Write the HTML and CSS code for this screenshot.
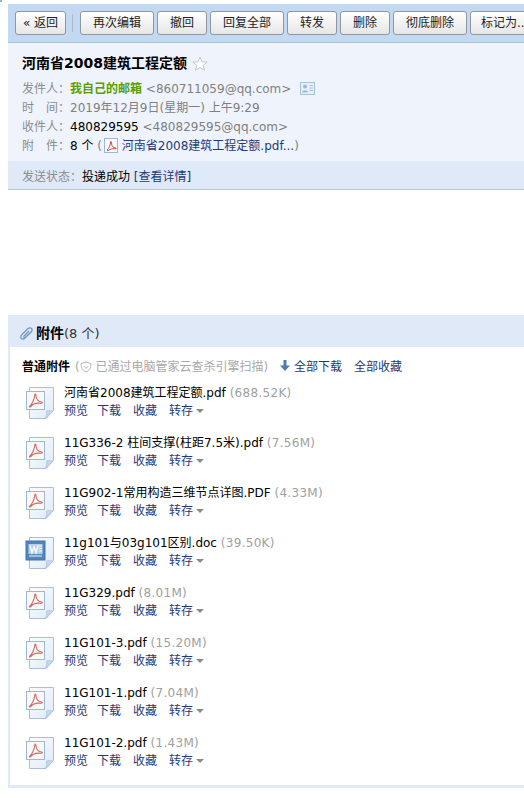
FILE: index.html
```html
<!DOCTYPE html>
<html lang="zh-CN">
<head>
  <meta charset="UTF-8">
  <meta name="viewport" content="width=device-width, initial-scale=1">
  <title>河南省2008建筑工程定额</title>
  <link rel="stylesheet" href="styles.css">
</head>
<body>
  <svg class="defs" width="0" height="0">
    <linearGradient id="page" x1="0" y1="0" x2="1" y2="1">
      <stop offset="0" stop-color="#fbfdff"/>
      <stop offset="1" stop-color="#dfeaf7"/>
    </linearGradient>
    <symbol id="file-pdf" viewBox="0 0 30 32">
      <path d="M4.500 .5H28.500V23.500L21 31.500H4.500Z" fill="url(#page)" stroke="#a9bfdc"/>
      <path d="M28 24C25 23.500 22.500 23.500 21.500 24C22 26.500 21.500 29 20.500 31Z" fill="#c6d8ee" stroke="#a9bfdc" stroke-width=".7"/>
      <rect x="1.500" y="4.500" width="18" height="18" fill="#fbf8f8" stroke="#9db7d8"/>
      <path d="M4.500 19.500C7 17.500 9.500 12 9.800 8C10 6.500 11 7 11 9C11 12 13.500 15 16.500 15C18 15 17.500 16.500 15.500 16.200C12 15.800 8 16.500 6 19.500C5.500 20.200 4 20 4.500 19.500Z" fill="none" stroke="#cf6a66" stroke-width="1.100"/>
    </symbol>
    <symbol id="file-doc" viewBox="0 0 30 32">
      <path d="M4.500 .5H28.500V23.500L21 31.500H4.500Z" fill="url(#page)" stroke="#a9bfdc"/>
      <path d="M28 24C25 23.500 22.500 23.500 21.500 24C22 26.500 21.500 29 20.500 31Z" fill="#c6d8ee" stroke="#a9bfdc" stroke-width=".7"/>
      <rect x="1" y="4" width="19" height="19" fill="#4f86bd" stroke="#3f75ad"/>
      <rect x="3.500" y="7" width="14" height="10" fill="#b9cfe6"/>
      <path d="M5 8.500L7 15.500L9 10L11 15.500L13 8.500" fill="none" stroke="#f2f6fb" stroke-width="1.600"/>
      <path d="M14 9H17M14 11.500H17M14 14H17M4 19H17" stroke="#f2f6fb"/>
    </symbol>
  </svg>
  <span class="corner"></span>

  <div class="toolbar">
    <button class="btn btn-back">« 返回</button>
    <span class="sep"></span>
    <button class="btn w74">再次编辑</button>
    <button class="btn w50">撤回</button>
    <button class="btn w74">回复全部</button>
    <button class="btn w50">转发</button>
    <button class="btn w50">删除</button>
    <button class="btn w74">彻底删除</button>
    <button class="btn btn-more">标记为...</button>
  </div>

  <div class="mail-head">
    <h1 class="subject">河南省2008建筑工程定额
      <svg class="star" width="16" height="15" viewBox="0 0 16 15"><path d="M8 1L10 5.800L15.200 6.100L11.200 9.400L12.500 14.300L8 11.600L3.500 14.300L4.800 9.400L.8 6.100L6 5.800Z" fill="#fff" stroke="#c4c8cf"/></svg>
    </h1>
    <div class="meta"><span class="lbl">发件人：</span><b class="sender">我自己的邮箱</b> <span class="addr">&lt;860711059@qq.com&gt;</span>
      <svg class="card-icon" width="15" height="13" viewBox="0 0 15 13"><rect x=".5" y=".5" width="14" height="12" fill="#e6eef8" stroke="#a9c2dc"/><circle cx="5" cy="4.500" r="2" fill="#9db9d6"/><path d="M2 10.500C2 7.500 8 7.500 8 10.500Z" fill="#9db9d6"/><path d="M9.500 3.500H13M9.500 6H13M9.500 8.500H13" stroke="#a9c2dc"/></svg>
    </div>
    <div class="meta"><span class="lbl">时　间：</span><span class="addr">2019年12月9日(星期一) 上午9:29</span></div>
    <div class="meta"><span class="lbl">收件人：</span>480829595 <span class="addr">&lt;480829595@qq.com&gt;</span></div>
    <div class="meta"><span class="lbl">附　件：</span>8 个 <span class="addr">(</span><svg class="mini-pdf" width="14" height="15"><rect x=".5" y=".5" width="13" height="14" fill="#f7f9fc" stroke="#9db7d8"/><path d="M3 12C5 10.500 6.500 7 6.500 4C6.500 3 7.500 3 7.500 5C7.500 8 9 10 12 10C12.500 10 12.500 11 11 10.800C8.500 10.500 5.500 11 4 12.800Z" fill="none" stroke="#c8504a"/></svg> <a class="link">河南省2008建筑工程定额.pdf...</a><span class="addr">)</span></div>
  </div>
  <div class="status"><span class="lbl">发送状态：</span>投递成功 <a class="link">[查看详情]</a></div>

  <div class="attach">
    <div class="attach-title">
      <svg class="clip" width="15" height="15" viewBox="0 0 15 15"><path d="M12.500 5.500L6 12C4.500 13.500 2 13.500 1.800 11.500C1.600 10.500 2 9.500 3 8.500L8.500 3C10 1.500 12.500 1.500 13 3C13.500 4.500 12.800 5.500 12 6.300L6.500 11.500C5.500 12.300 4.300 11.500 5 10.200L10 5" fill="none" stroke="#6f98c6" stroke-width="1.300"/></svg>
      <b>附件</b>(8 个)
    </div>
    <div class="attach-body">
      <div class="attach-sub">
        <b>普通附件</b>
        <span class="scan">(<svg class="shield" width="12" height="12" viewBox="0 0 12 12"><path d="M6 1L11 2.500C11 6.500 9.500 9.500 6 11C2.500 9.500 1 6.500 1 2.500Z" fill="none" stroke="#b5b5b5"/><path d="M3.800 5L6 7.500L8.200 5" fill="none" stroke="#b5b5b5"/></svg> 已通过电脑管家云查杀引擎扫描)</span>
        <a class="link all-down"><svg width="10" height="11" viewBox="0 0 10 11"><path d="M3.500 0H6.500V5.500H10L5 11L0 5.500H3.500Z" fill="#4f7cac"/></svg> 全部下载</a>
        <a class="link all-save">全部收藏</a>
      </div>

      <div class="item"><svg class="file-icon"><use href="#file-pdf"/></svg><div><div class="name">河南省2008建筑工程定额.pdf <span class="size">(688.52K)</span></div><div class="acts"><a>预览</a><a>下载</a><a>收藏</a><a>转存<i class="caret"></i></a></div></div></div>
      <div class="item"><svg class="file-icon"><use href="#file-pdf"/></svg><div><div class="name">11G336-2 柱间支撑(柱距7.5米).pdf <span class="size">(7.56M)</span></div><div class="acts"><a>预览</a><a>下载</a><a>收藏</a><a>转存<i class="caret"></i></a></div></div></div>
      <div class="item"><svg class="file-icon"><use href="#file-pdf"/></svg><div><div class="name">11G902-1常用构造三维节点详图.PDF <span class="size">(4.33M)</span></div><div class="acts"><a>预览</a><a>下载</a><a>收藏</a><a>转存<i class="caret"></i></a></div></div></div>
      <div class="item"><svg class="file-icon"><use href="#file-doc"/></svg><div><div class="name">11g101与03g101区别.doc <span class="size">(39.50K)</span></div><div class="acts"><a>预览</a><a>下载</a><a>收藏</a><a>转存<i class="caret"></i></a></div></div></div>
      <div class="item"><svg class="file-icon"><use href="#file-pdf"/></svg><div><div class="name">11G329.pdf <span class="size">(8.01M)</span></div><div class="acts"><a>预览</a><a>下载</a><a>收藏</a><a>转存<i class="caret"></i></a></div></div></div>
      <div class="item"><svg class="file-icon"><use href="#file-pdf"/></svg><div><div class="name">11G101-3.pdf <span class="size">(15.20M)</span></div><div class="acts"><a>预览</a><a>下载</a><a>收藏</a><a>转存<i class="caret"></i></a></div></div></div>
      <div class="item"><svg class="file-icon"><use href="#file-pdf"/></svg><div><div class="name">11G101-1.pdf <span class="size">(7.04M)</span></div><div class="acts"><a>预览</a><a>下载</a><a>收藏</a><a>转存<i class="caret"></i></a></div></div></div>
      <div class="item"><svg class="file-icon"><use href="#file-pdf"/></svg><div><div class="name">11G101-2.pdf <span class="size">(1.43M)</span></div><div class="acts"><a>预览</a><a>下载</a><a>收藏</a><a>转存<i class="caret"></i></a></div></div></div>
    </div>
  </div>
</body>
</html>
```

FILE: styles.css
```css
html {
  overflow: hidden;
}
body {
  margin: 4px 0 0 8px;
  background: #fff;
  color: #000;
  font: 12px/19px "DejaVu Sans", "Noto Sans CJK SC", sans-serif;
}
.defs {
  position: absolute;
}
.corner {
  position: absolute;
  top: 0;
  left: 0;
  width: 2px;
  height: 2px;
  background: #8fb4de;
}
a {
  color: #1e3a78;
}

.toolbar {
  display: flex;
  align-items: center;
  gap: 3px;
  height: 38px;
  padding-left: 7px;
  background: #c3d9f1;
  border-bottom: 1px solid #a9bfd8;
  overflow: hidden;
}
.btn {
  flex-shrink: 0;
  height: 24px;
  padding: 0;
  font: inherit;
  color: #222;
  background: linear-gradient(#fff, #e6e6e6);
  border: 1px solid #8f979f;
  border-radius: 3px;
  white-space: nowrap;
}
.btn-back { width: 51px; }
.btn-more {
  width: 62px;
  padding-left: 10px;
  text-align: left;
}
.w74 { width: 74px; }
.w50 { width: 50px; }
.sep {
  flex-shrink: 0;
  width: 1px;
  height: 18px;
  margin: 0 4px 0 3px;
  background: #a9bccf;
}

.mail-head {
  padding: 9px 14px 5px;
  background: #eff4fc;
}
.subject {
  margin: 0 0 6px;
  font-size: 14px;
  line-height: 22px;
  font-weight: bold;
}
.star {
  vertical-align: -3px;
}
.lbl {
  color: #8c8c8c;
}
.addr {
  color: #808080;
}
.sender {
  color: #5a9e00;
}
.link {
  color: #1e3a78;
}
.card-icon {
  vertical-align: -2px;
  margin-left: 5px;
}
.mini-pdf {
  vertical-align: -3px;
  margin-left: 2px;
}

.status {
  height: 26px;
  padding: 2px 0 0 14px;
  line-height: 29px;
  background: #dfe9f8;
  border-bottom: 1px solid #b3c6dd;
}

.attach {
  margin-top: 125px;
  border-left: 2px solid #dfe9f8;
  border-bottom: 3px solid #dfe9f8;
}
.attach-title {
  display: flex;
  align-items: center;
  height: 32px;
  margin-left: -2px;
  padding: 4px 0 0 11px;
  box-sizing: border-box;
  background: #dfe9f8;
  color: #333;
  font-size: 13px;
}
.clip {
  margin-right: 2px;
}
.attach-title b {
  color: #000;
  font-size: 14px;
}
.attach-body {
  height: 438px;
  padding: 11px 0 0 12px;
  box-sizing: border-box;
}
.attach-sub {
  display: flex;
  align-items: center;
  white-space: nowrap;
}
.scan {
  color: #a8a8a8;
  margin-left: 5px;
}
.shield {
  vertical-align: -2px;
}
.all-down {
  margin-left: 12px;
}
.all-save {
  margin-left: 12px;
}

.item {
  display: flex;
  height: 50px;
  padding-top: 8px;
  box-sizing: border-box;
}
.file-icon {
  width: 30px;
  height: 32px;
  margin: 2px 9px 0 3px;
  flex-shrink: 0;
}
.name {
  line-height: 17px;
  white-space: nowrap;
}
.size {
  color: #a0a0a0;
  letter-spacing: .3px;
}
.acts {
  display: flex;
  gap: 12px;
  margin-top: 1px;
  line-height: 17px;
}
.acts a:first-child {
  margin-right: -3px;
}
.caret {
  display: inline-block;
  margin-left: 3px;
  border: 4px solid transparent;
  border-top: 4px solid #8a8a8a;
  border-bottom: 0;
  vertical-align: 2px;
}
```
